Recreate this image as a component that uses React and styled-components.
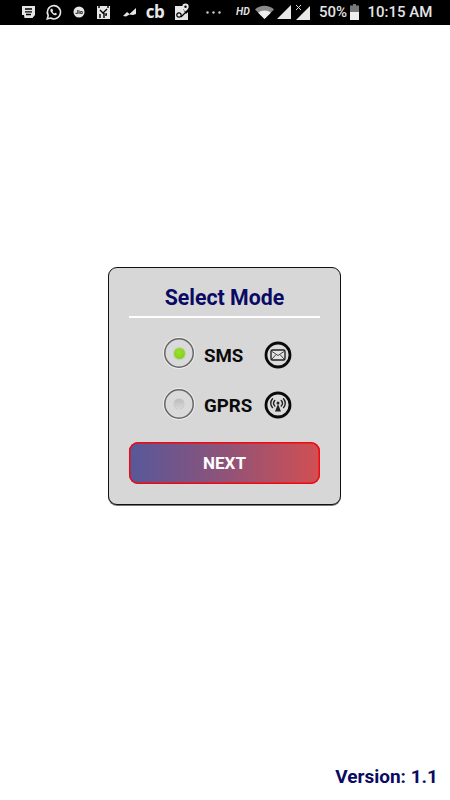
import React from "react";
import styled, { createGlobalStyle } from "styled-components";

const Global = createGlobalStyle`
  html, body { margin: 0; padding: 0; background: #fff; }
  * { box-sizing: border-box; }
`;
const Page = styled.div`
  width: 450px; height: 800px; display: flex; flex-direction: column;
  font-family: Roboto, "Liberation Sans", sans-serif; overflow: hidden; background: #fff;
`;
const StatusBar = styled.div`
  height: 25px; flex: none; background: #000; color: #e4e4e4; display: flex; align-items: center;
  padding: 0 17px 1px 0;
`;
const Slot = styled.span`
  display: flex; align-items: center; justify-content: center; flex: none;
  width: ${p => p.$w}px; margin-left: ${p => p.$ml}px; height: 20px;
`;
const Cb = styled.span`
  font: 700 17px/20px "Open Sans", sans-serif; letter-spacing: -0.5px; color: #e8e8e8;
`;
const Hd = styled.span`
  font: italic 700 10.5px/20px Roboto, sans-serif; color: #ddd;
`;
const Clock = styled.span`
  font: 500 15px/20px Roboto, sans-serif; color: #e4e4e4; white-space: nowrap;
`;
const Main = styled.main`
  flex: 1; display: flex; align-items: flex-start; padding: 242px 0 0 108px;
`;
const Card = styled.section`
  width: 233px; height: 238px; background: #d7d7d7; border: 1px solid #111; border-radius: 9px;
  box-shadow: 0 1px 0 #777; display: flex; flex-direction: column; padding: 17px 20px 0;
`;
const Title = styled.h1`
  margin: 0; font: 700 21.3px/26px Roboto, sans-serif; color: #0a0a64; text-align: center;
`;
const Rule = styled.div`
  height: 2px; background: #fff; margin-top: 5px; flex: none;
`;
const Options = styled.div`
  display: flex; flex-direction: column; gap: 20px; margin-top: 22px; padding-left: 35px;
`;
const Option = styled.div`
  display: grid; grid-template-columns: 30px 50px 28px; align-items: center; height: 30px; column-gap: 10px;
`;
const Radio = styled.span`
  width: 30px; height: 30px; border-radius: 50%; background: #dadada;
  box-shadow: inset 0 0 0 1.5px #666, 0 0 0 1px #eee;
  display: flex; align-items: center; justify-content: center; align-self: start;
  margin-top: ${p => p.$lift}px;
`;
const Dot = styled.span`
  width: ${p => (p.$on ? 11 : 10)}px; height: ${p => (p.$on ? 11 : 10)}px; border-radius: 50%;
  background: ${p => (p.$on ? "radial-gradient(circle at 45% 40%, #9be02e, #78cc14)" : "linear-gradient(180deg, #bcbcbc, #d8d8d8)")};
  box-shadow: ${p => (p.$on ? "0 0 2px #9bb36a" : "0 0 1px #888")};
`;
const Label = styled.span`
  font: 700 18.7px/24px Roboto, sans-serif; color: #0b0b0b; padding-top: 2px;
`;
const IconWrap = styled.span`
  width: 28px; height: 28px; display: flex;
`;
const NextButton = styled.button`
  margin-top: 22px; height: 42px; width: 100%; flex: none; border: none; border-radius: 9px;
  background: linear-gradient(90deg, #56589b 0%, #8f5378 50%, #d24f52 100%);
  box-shadow: inset 0 0 0 1.5px #f2080f;
  color: #fff; font: 700 17px/20px Roboto, sans-serif; padding: 0;
`;
const Footer = styled.footer`
  flex: none; height: 37px; display: flex; justify-content: flex-end; padding: 2px 12px 0 0;
  font: 700 19px/24px Roboto, sans-serif; color: #0a0a64;
`;

const c = "#e6e6e6";
const NoteIcon = () => (
  <svg width="15" height="14" viewBox="0 0 15 14"><path d="M1 1h13v9l-2.5 3H3.500L3 10H1z" fill={c}/><path d="M4 4h7M4 6.800h7M5 9.500h5" stroke="#000" strokeWidth="1.300"/></svg>
);
const WhatsApp = () => (
  <svg width="17" height="17" viewBox="0 0 17 17"><path d="M2.300 14.800l.9-3.200A6.600 6.600 0 1 1 5.600 14z" fill="none" stroke={c} strokeWidth="1.600"/><path d="M6 4.800c-1 .8-.9 2.200.3 3.800s2.800 2.700 4.100 2.600c1-.1 1.500-.8 1.500-1.500L10.400 8.700l-.9.8c-.8-.3-1.600-1.200-2-2.100l.6-.9-.9-1.800z" fill={c}/></svg>
);
const JioMark = () => (
  <svg width="12" height="12" viewBox="0 0 12 12"><circle cx="6" cy="6" r="5.500" fill={c}/><text x="6" y="8" fontSize="5.500" fontWeight="700" textAnchor="middle" fontFamily="Roboto" fill="#000">Jio</text></svg>
);
const BagIcon = () => (
  <svg width="15" height="16" viewBox="0 0 15 16"><path d="M1 2h13v13H1z" fill={c}/><path d="M3 0v4M12 0v4M4 6l3 3 4-4M8 9v5M4 10v4M11 10h-1v2" stroke="#000" strokeWidth="1.400" fill="none"/></svg>
);
const ChartIcon = () => (
  <svg width="13" height="9" viewBox="0 0 13 9"><path d="M0 8l4-4 2.500 2L13 0v6l-3 1-3.500-.5L3 8.500z" fill={c}/></svg>
);
const MapIcon = () => (
  <svg width="16" height="18" viewBox="0 0 16 18"><path d="M1 3h8v3l3 5 2-2v8H1z" fill={c}/><path d="M11.500 0.500a3.200 3.200 0 0 1 3.200 3.200c0 2-3.200 5-3.200 5s-3.200-3-3.200-5a3.200 3.200 0 0 1 3.200-3.200z" fill={c}/><circle cx="11.500" cy="3.700" r="1.200" fill="#000"/><circle cx="5" cy="12" r="2.200" fill="none" stroke="#000" strokeWidth="1.200"/><path d="M7 14l6-6" stroke="#000" strokeWidth="1.200"/></svg>
);
const Dots = () => (
  <svg width="15" height="3" viewBox="0 0 15 3"><circle cx="1.500" cy="1.500" r="1.200" fill="#ccc"/><circle cx="7.500" cy="1.500" r="1.200" fill="#ccc"/><circle cx="13.500" cy="1.500" r="1.200" fill="#ccc"/></svg>
);
const Wifi = () => (
  <svg width="19" height="14" viewBox="0 0 19 14"><path d="M0 4.500C5-.5 14-.5 19 4.500l-9.500 9.500z" fill="#8a8a8a"/><path d="M3.200 7.700c3.500-3 9.100-3 12.600 0l-6.300 6.300z" fill="#eee"/></svg>
);
const Signal = () => (
  <svg width="14" height="14" viewBox="0 0 14 14"><path d="M14 0v14H0z" fill="#e8e8e8"/></svg>
);
const SignalX = () => (
  <svg width="15" height="16" viewBox="0 0 15 16"><path d="M15 2v14H1z" fill="#e8e8e8"/><path d="M1 1l5 5M6 1L1 6" stroke="#ddd" strokeWidth="1"/></svg>
);
const Battery = () => (
  <svg width="9" height="16" viewBox="0 0 9 16"><path d="M3 0h3v1.500h3V16H0V1.500h3z" fill="#777"/><path d="M0 8h9v8H0z" fill="#eee"/></svg>
);
const MailIcon = () => (
  <svg width="28" height="28" viewBox="0 0 28 28">
    <circle cx="14" cy="14" r="12" fill="#dcdcdc" stroke="#0a0a0a" strokeWidth="2.800"/>
    <rect x="7" y="9" width="14" height="10" rx="1.500" fill="#e2e2e2" stroke="#222" strokeWidth="1.400"/>
    <path d="M8 10.500l6 4 6-4M8 18l4-4.500M20 18l-4-4.500" fill="none" stroke="#444" strokeWidth="1"/>
  </svg>
);
const AntennaIcon = () => (
  <svg width="28" height="28" viewBox="0 0 28 28">
    <circle cx="14" cy="14" r="12" fill="#dcdcdc" stroke="#0a0a0a" strokeWidth="2.800"/>
    <path d="M14 13l-3 7.500h6z" fill="#222"/>
    <circle cx="14" cy="12" r="1.500" fill="#222"/>
    <g fill="none" stroke="#222" strokeWidth="1.400" strokeLinecap="round">
      <path d="M10.800 9.500a4 4 0 0 0 0 5.500M17.200 9.500a4 4 0 0 1 0 5.500"/>
      <path d="M8.500 7.800a7 7 0 0 0 0 8.800M19.500 7.800a7 7 0 0 1 0 8.800"/>
    </g>
  </svg>
);

const ModeOption = ({ label, on, icon, lift }) => (
  <Option>
    <Radio $lift={lift}><Dot $on={on} /></Radio>
    <Label>{label}</Label>
    <IconWrap>{icon}</IconWrap>
  </Option>
);

export default function App() {
  return (
    <Page>
      <Global />
      <StatusBar>
        <Slot $w={15} $ml={21}><NoteIcon /></Slot>
        <Slot $w={17} $ml={9}><WhatsApp /></Slot>
        <Slot $w={12} $ml={11}><JioMark /></Slot>
        <Slot $w={15} $ml={11}><BagIcon /></Slot>
        <Slot $w={13} $ml={12}><ChartIcon /></Slot>
        <Slot $w={20} $ml={9}><Cb>cb</Cb></Slot>
        <Slot $w={16} $ml={9}><MapIcon /></Slot>
        <Slot $w={15} $ml={16}><Dots /></Slot>
        <Slot $w={16} $ml={14}><Hd>HD</Hd></Slot>
        <Slot $w={19} $ml={4}><Wifi /></Slot>
        <Slot $w={14} $ml={3}><Signal /></Slot>
        <Slot $w={15} $ml={4}><SignalX /></Slot>
        <Slot $w={28} $ml={9}><Clock>50%</Clock></Slot>
        <Slot $w={9} $ml={3}><Battery /></Slot>
        <Slot $w={66} $ml={8}><Clock>10:15 AM</Clock></Slot>
      </StatusBar>
      <Main>
        <Card>
          <Title>Select Mode</Title>
          <Rule />
          <Options>
            <ModeOption label="SMS" on lift={-2} icon={<MailIcon />} />
            <ModeOption label="GPRS" lift={-1} icon={<AntennaIcon />} />
          </Options>
          <NextButton>NEXT</NextButton>
        </Card>
      </Main>
      <Footer>Version: 1.1</Footer>
    </Page>
  );
}
